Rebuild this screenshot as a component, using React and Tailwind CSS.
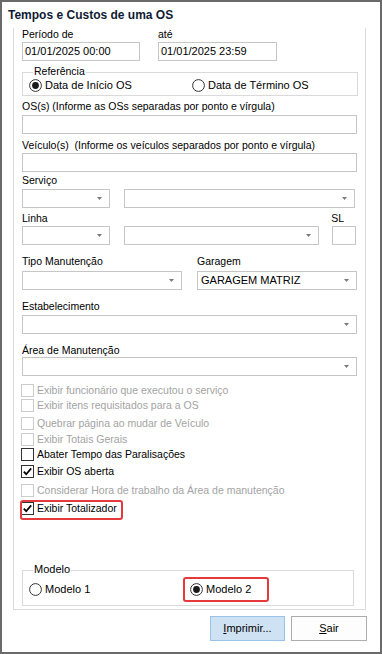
import React from "react";

// Small Windows-style controls
function Radio({ checked }) {
  return (
    <svg width="13" height="13" viewBox="0 0 13 13" className="shrink-0">
      <circle cx="6.5" cy="6.5" r="5.9" fill="white" stroke="#333333" strokeWidth="1" />
      {checked && <circle cx="6.5" cy="6.5" r="3.4" fill="#1a1a1a" />}
    </svg>
  );
}

function Check({ checked, disabled }) {
  return (
    <div
      className={`w-[13px] h-[13px] shrink-0 border bg-white flex items-center justify-center ${
        disabled ? "border-[#cccccc]" : "border-[#333333]"
      }`}
    >
      {checked && (
        <svg width="11" height="11" viewBox="0 0 11 11">
          <path d="M1.8 5.6 L4.2 8.2 L9.2 2.4" fill="none" stroke="#000" strokeWidth="1.7" />
        </svg>
      )}
    </div>
  );
}

function Arrow() {
  return (
    <svg width="5" height="3" viewBox="0 0 5 3" className="shrink-0">
      <path d="M0 0 H5 L2.5 3 Z" fill="#7a7a7a" />
    </svg>
  );
}

function Input({ w, value = "", className = "" }) {
  return (
    <div
      className={`h-[19px] border border-[#c6c6c6] bg-white flex items-center pl-[2px] text-[11px] text-black ${className}`}
      style={w ? { width: w } : undefined}
    >
      {value}
    </div>
  );
}

function Combo({ value = "", className = "" }) {
  return (
    <div
      className={`h-[19px] border border-[#c6c6c6] bg-white flex items-center justify-between pl-[3px] pr-[7px] text-[11px] text-black ${className}`}
    >
      <span>{value}</span>
      <Arrow />
    </div>
  );
}

function CheckRow({ label, checked, disabled, className = "", children }) {
  return (
    <div className={`relative h-[14px] flex items-center gap-[3px] -ml-px ${className}`}>
      <Check checked={checked} disabled={disabled} />
      <span className={disabled ? "text-[#a3a3a3]" : "text-black"}>{label}</span>
      {children}
    </div>
  );
}

export default function App() {
  return (
    <div className="w-[382px] h-[654px] border-2 border-[#6a6a6a] bg-white flex flex-col font-['Liberation_Sans',Arial,sans-serif] text-[10.5px] leading-[13px] text-black">
      {/* Title */}
      <div className="pt-[6px] pl-[6px] h-[20px] text-[12px] leading-[14px] font-bold text-[#0f1b33]">
        Tempos e Custos de uma OS
      </div>

      {/* Main panel */}
      <div className="mt-[6px] ml-[11px] w-[353px] h-[582px] border-l border-r border-b border-[#dadada] px-[8px] flex flex-col">
        {/* Período */}
        <div className="flex gap-[18px]">
          <div className="flex flex-col">
            <span className="h-[13px]">Período de</span>
            <Input w={118} value="01/01/2025 00:00" className="mt-[1px]" />
          </div>
          <div className="flex flex-col">
            <span className="h-[13px]">até</span>
            <Input w={119} value="01/01/2025 23:59" className="mt-[1px]" />
          </div>
        </div>

        {/* Referência */}
        <div className="relative mt-[11px] w-[336px] h-[24px] border border-[#dadada] pt-[5px] pl-[6px] flex text-[11px]">
          <span className="absolute -top-[8px] left-[10px] bg-white px-px text-[10.5px]">Referência</span>
          <div className="w-[163px] h-[14px] flex items-center gap-[3px]">
            <Radio checked />
            <span>Data de Início OS</span>
          </div>
          <div className="h-[14px] flex items-center gap-[3px]">
            <Radio />
            <span>Data de Término OS</span>
          </div>
        </div>

        <span className="mt-[4px] h-[13px]">OS(s) (Informe as OSs separadas por ponto e vírgula)</span>
        <Input className="mt-[2px] w-[335px]" />

        <span className="mt-[5px] h-[13px] whitespace-pre">Veículo(s)  (Informe os veículos separados por ponto e vírgula)</span>
        <Input className="mt-[1px] w-[335px]" />

        {/* Serviço */}
        <span className="mt-[2px] h-[13px]">Serviço</span>
        <div className="mt-[2px] flex gap-[14px]">
          <Combo className="w-[88px]" />
          <Combo className="w-[231px]" />
        </div>

        {/* Linha / SL */}
        <div className="mt-[4px] flex h-[13px]">
          <span className="flex-1">Linha</span>
          <span className="mr-[13px]">SL</span>
        </div>
        <div className="mt-[1px] flex">
          <Combo className="w-[88px]" />
          <Combo className="ml-[14px] w-[195px]" />
          <Input className="ml-[13px] w-[24px]" />
        </div>

        {/* Tipo Manutenção / Garagem */}
        <div className="mt-[10px] flex gap-[15px] h-[13px]">
          <span className="w-[160px]">Tipo Manutenção</span>
          <span>Garagem</span>
        </div>
        <div className="mt-[3px] flex gap-[15px]">
          <Combo className="w-[160px]" />
          <Combo className="w-[160px]" value="GARAGEM MATRIZ" />
        </div>

        <span className="mt-[10px] h-[13px]">Estabelecimento</span>
        <Combo className="mt-[2px] w-[335px]" />

        <span className="mt-[10px] h-[13px]">Área de Manutenção</span>
        <Combo className="w-[335px]" />

        {/* Options */}
        <CheckRow className="mt-[7px]" label="Exibir funcionário que executou o serviço" disabled />
        <CheckRow className="mt-[1px]" label="Exibir itens requisitados para a OS" disabled />
        <CheckRow className="mt-[4px]" label="Quebrar página ao mudar de Veículo" disabled />
        <CheckRow className="mt-[2px]" label="Exibir Totais Gerais" disabled />
        <CheckRow className="mt-[1px]" label="Abater Tempo das Paralisações" />
        <CheckRow className="mt-[3px]" label="Exibir OS aberta" checked />
        <CheckRow className="mt-[5px]" label="Considerar Hora de trabalho da Área de manutenção" disabled />
        <CheckRow className="mt-[4px]" label="Exibir Totalizador" checked>
          <div className="absolute -top-[1px] -left-[1px] w-[103px] h-[20px] rounded-[3px] border-2 border-[#e5393b]" />
        </CheckRow>

        {/* Modelo */}
        <div className="relative mt-[55px] w-[332px] h-[36px] border border-[#dadada] pt-[11px] pl-[6px] flex text-[11px]">
          <span className="absolute -top-[8px] left-[10px] bg-white px-px">Modelo</span>
          <div className="w-[161px] h-[14px] flex items-center gap-[3px]">
            <Radio />
            <span>Modelo 1</span>
          </div>
          <div className="relative h-[14px] flex items-center gap-[3px]">
            <Radio checked />
            <span>Modelo 2</span>
            <div className="absolute -top-[5px] -left-[7px] w-[86px] h-[25px] rounded-[3px] border-2 border-[#e5393b]" />
          </div>
        </div>
      </div>

      {/* Buttons */}
      <div className="mt-[6px] mr-[13px] flex justify-end gap-[6px] text-[11px]">
        <button className="w-[75px] h-[25px] border border-[#99c3e8] bg-[#cfe2f4] text-black flex items-center justify-center">
          <span>
            <span className="underline">I</span>mprimir...
          </span>
        </button>
        <button className="w-[76px] h-[25px] border border-[#adadad] bg-[#fdfdfd] text-black flex items-center justify-center">
          <span>
            <span className="underline">S</span>air
          </span>
        </button>
      </div>
    </div>
  );
}
